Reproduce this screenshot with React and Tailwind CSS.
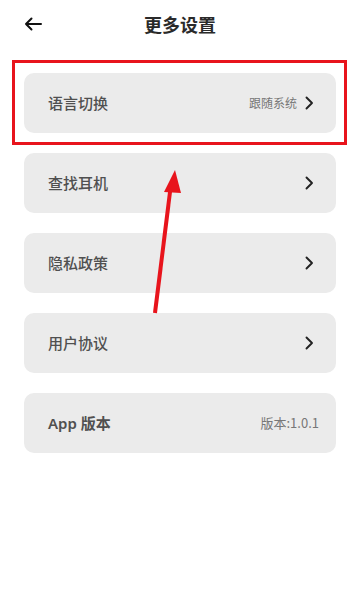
const font = { fontFamily: '"Noto Sans CJK SC", "Noto Sans", sans-serif' }

function Row({ label, value, arrow = true }) {
  return (
    <div className="h-[60px] rounded-[10px] bg-[#ebebeb] flex items-center pl-6 pr-[22px]">
      <span className="flex-1 text-[15px] font-medium text-[#505050]">{label}</span>
      {value && <span className="text-[12px] text-[#777] mr-2">{value}</span>}
      {arrow && (
        <svg width="9" height="14" viewBox="0 0 9 14" className="text-[#222]">
          <path d="M1.5 1.5 L7 7 L1.5 12.5" fill="none" stroke="currentColor" strokeWidth="1.9" strokeLinecap="round" strokeLinejoin="round" />
        </svg>
      )}
    </div>
  )
}

export default function App() {
  return (
    <div className="relative w-[360px] h-[612px] bg-white" style={font}>
      {/* Header */}
      <div className="relative h-[48px] flex items-center justify-center">
        <svg width="18" height="14" viewBox="0 0 18 14" className="absolute left-[24px] top-[17px]">
          <path d="M17 7 H2 M7.5 1.5 L2 7 L7.5 12.5" fill="none" stroke="#111" strokeWidth="2" strokeLinecap="round" strokeLinejoin="round" />
        </svg>
        <h1 className="text-[18px] font-bold text-[#2a2a2a]">更多设置</h1>
      </div>

      {/* List */}
      <div className="flex flex-col gap-5 px-6 pt-[25px]">
        <Row label="语言切换" value="跟随系统" />
        <Row label="查找耳机" />
        <Row label="隐私政策" />
        <Row label="用户协议" />
        <div className="h-[60px] rounded-[10px] bg-[#ebebeb] flex items-center pl-6 pr-[17px]">
          <span className="flex-1 text-[15px] font-semibold text-[#505050]" style={{ fontFamily: '"Noto Sans", "Noto Sans CJK SC", sans-serif' }}>App 版本</span>
          <span className="text-[13px] text-[#777]">版本:1.0.1</span>
        </div>
      </div>

      {/* Annotation overlay */}
      <div className="absolute left-[12px] top-[60px] w-[335px] h-[85px] border-[3px] border-[#e8141c]" />
      <svg className="absolute left-0 top-0 pointer-events-none" width="360" height="612">
        <line x1="155" y1="313" x2="170.5" y2="188" stroke="#e8141c" strokeWidth="4" />
        <polygon points="175,170 164,192 181,193" fill="#e8141c" />
      </svg>
    </div>
  )
}
